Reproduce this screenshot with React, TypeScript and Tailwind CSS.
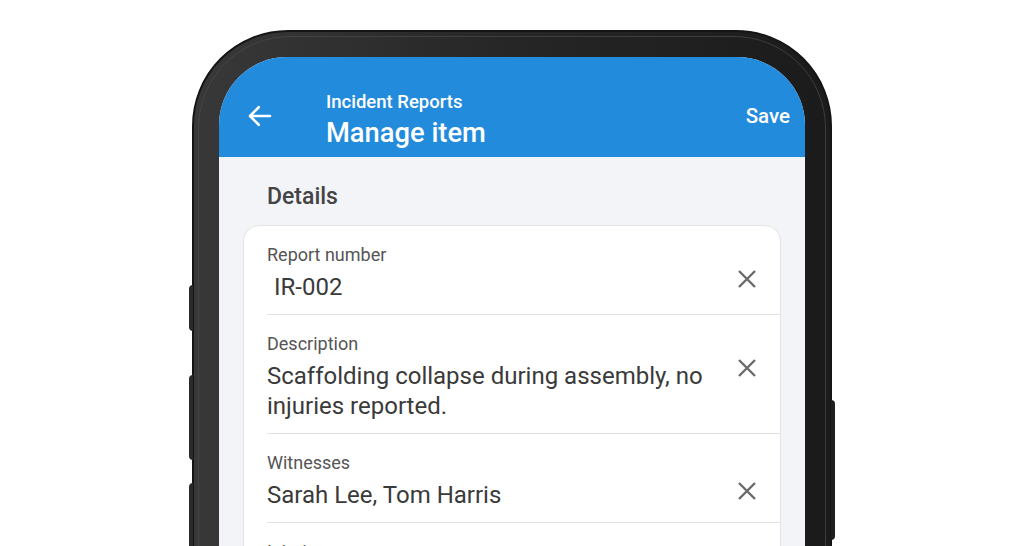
import React from "react";

const FIELDS = [
  { label: "Report number", value: "IR-002", indent: true, iconTop: "pt-[43px]" },
  { label: "Description", value: "Scaffolding collapse during assembly, no injuries reported.", iconTop: "pt-[43px]" },
  { label: "Witnesses", value: "Sarah Lee, Tom Harris", iconTop: "pt-[47px]" },
  { label: "Injuries", value: "None", iconTop: "pt-[43px]" },
];

function CloseIcon() {
  return (
    <svg width="20" height="20" viewBox="0 0 20 20" fill="none">
      <path d="M2 2 L18 18 M18 2 L2 18" stroke="#6a6a6a" strokeWidth="2.4" strokeLinecap="butt" />
    </svg>
  );
}

function BackArrow() {
  return (
    <svg width="30" height="30" viewBox="0 0 24 24" fill="none">
      <path d="M20 12H4.5 M11 5l-7 7 7 7" stroke="white" strokeWidth="2.1" strokeLinecap="round" strokeLinejoin="round" />
    </svg>
  );
}

export default function App() {
  return (
    <div
      className="h-[546px] w-full overflow-hidden bg-white flex justify-center pt-[30px]"
      style={{ fontFamily: "Roboto, 'Noto Sans', sans-serif" }}
    >
      {/* Phone */}
      <div className="relative w-[640px] shrink-0">
        {/* side buttons */}
        <div className="absolute left-[-3px] top-[255px] w-[4px] h-[46px] rounded-l-sm bg-[#2a2a2a]" />
        <div className="absolute left-[-3px] top-[345px] w-[4px] h-[85px] rounded-l-sm bg-[#2a2a2a]" />
        <div className="absolute left-[-3px] top-[453px] w-[4px] h-[90px] rounded-l-sm bg-[#2a2a2a]" />
        <div className="absolute right-[-3px] top-[370px] w-[4px] h-[140px] rounded-r-sm bg-[#1e1e1e]" />

        <div className="h-[600px] rounded-t-[96px] border-2 border-[#151515] bg-gradient-to-r from-[#383838] via-[#262626] to-[#1b1b1b] p-[4px]">
          <div className="h-full rounded-t-[92px] border border-[#4a4a4a]/70 p-[20px] pb-0">
            {/* Screen */}
            <div className="h-full rounded-t-[68px] overflow-hidden bg-[#f3f4f8] flex flex-col">
              {/* App bar */}
              <div className="h-[100px] shrink-0 bg-[#238bdb] flex items-center pt-[18px] pl-[26px] pr-[15px] text-white">
                <BackArrow />
                <div className="ml-[51px] mt-[8px] flex flex-col">
                  <span className="text-[18.5px] font-medium leading-[24px]">Incident Reports</span>
                  <span className="text-[27.3px] font-medium leading-[34px] mt-[2px]">Manage item</span>
                </div>
                <span className="ml-auto text-[20.5px] font-medium">Save</span>
              </div>

              {/* Content */}
              <div className="px-[24px] pt-[26px]">
                <h2 className="pl-[24px] text-[23px] font-medium text-[#444] leading-[28px]">Details</h2>
                <div className="mt-[14px] bg-white rounded-[16px] border border-[#e3e3e6]">
                  {FIELDS.map((f) => (
                    <div key={f.label} className="ml-[23px] border-b border-[#e2e2e2] flex items-start">
                      <div className="flex-1 pt-[18px] pb-[12px]">
                        <div className="text-[18px] leading-[22px] text-[#555]">{f.label}</div>
                        <div
                          className={`mt-[6px] text-[24px] leading-[30px] text-[#3a3a3a] ${f.indent ? "pl-[7px]" : ""}`}
                        >
                          {f.value}
                        </div>
                      </div>
                      <div className={`w-[64px] shrink-0 flex justify-center mr-[1px] ${f.iconTop}`}>
                        <CloseIcon />
                      </div>
                    </div>
                  ))}
                </div>
              </div>
            </div>
          </div>
        </div>
      </div>
    </div>
  );
}
